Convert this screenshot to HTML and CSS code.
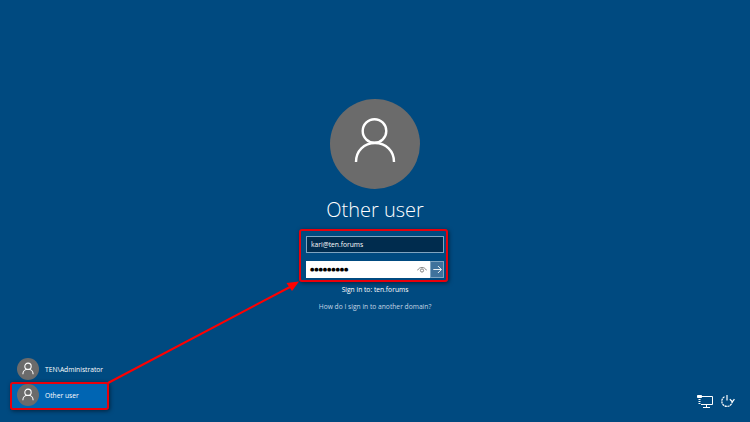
FILE: index.html
```html
<!DOCTYPE html>
<html>
<head>
  <title>Sign in</title>
  <link rel="stylesheet" href="styles.css">
</head>
<body>
  <div class="screen">
    <main class="login">
      <div class="avatar">
        <svg width="90" height="90" viewBox="0 0 90 90" fill="none" stroke="#fff" stroke-width="2.4">
          <circle cx="44.500" cy="32" r="11.800"/>
          <path d="M26 63c0-11 8-19 19-19s19 8 19 19"/>
        </svg>
      </div>
      <h1 class="name">Other user</h1>
      <div class="fields">
        <div class="field field-user">kari@ten.forums</div>
        <div class="password-row">
          <div class="field field-pass">
            <span class="dots">●●●●●●●●●</span>
            <svg class="eye" width="10" height="6" viewBox="0 0 10 6" fill="none" stroke="#666" stroke-width="0.8">
              <path d="M0.400 3.400C1.600 1.300 3.300 0.500 5 0.500s3.400 0.800 4.600 2.900"/>
              <circle cx="5" cy="3.500" r="1.600"/>
            </svg>
          </div>
          <div class="submit">
            <svg width="9" height="9" viewBox="0 0 9 9" fill="none" stroke="#fff" stroke-width="0.9">
              <path d="M0.300 4.500h7.900M4.900 1l3.500 3.500L4.900 8"/>
            </svg>
          </div>
        </div>
      </div>
      <p class="sign-in">Sign in to: ten.forums</p>
      <p class="other-domain">How do I sign in to another domain?</p>
    </main>

    <footer class="bottom">
      <ul class="users">
        <li class="user">
          <span class="user-pic">
            <svg width="22" height="22" viewBox="0 0 90 90" fill="none" stroke="#fff" stroke-width="4.500">
              <circle cx="45" cy="34" r="13"/>
              <path d="M24 66c0-12 9-20 21-20s21 8 21 20"/>
            </svg>
          </span>
          TEN\Administrator
        </li>
        <li class="user user-active">
          <span class="user-pic">
            <svg width="22" height="22" viewBox="0 0 90 90" fill="none" stroke="#fff" stroke-width="4.500">
              <circle cx="45" cy="34" r="13"/>
              <path d="M24 66c0-12 9-20 21-20s21 8 21 20"/>
            </svg>
          </span>
          Other user
        </li>
      </ul>
      <div class="tray">
        <svg width="16" height="13" viewBox="0 0 16 13" fill="none" stroke="#fff" stroke-width="1">
          <path d="M4 1.500h11.500v8H4M9.500 9.500v2.500M6 12.500h7"/>
          <path d="M0.500 0.500h4v2h-4z" fill="#fff"/>
          <path d="M1.500 4.500h2M1.500 6.500h2M1.500 8.500h2"/>
        </svg>
        <svg width="15" height="14" viewBox="0 0 15 14" fill="none" stroke="#fff" stroke-width="1.200">
          <path d="M4.500 2.700a5.200 5.200 0 1 0 7.700 4.800" stroke-dasharray="2.200 0.600"/>
          <path d="M7 1v5.500"/>
          <path d="M9.800 5.300l2.600 2.500 2-2.600"/>
        </svg>
      </div>
    </footer>

    <!-- annotations drawn on top of the screenshot -->
    <div class="mark mark-fields"></div>
    <div class="mark mark-user"></div>
    <svg class="arrow" width="750" height="422" viewBox="0 0 750 422" fill="none">
      <path d="M108 383L290 287" stroke="#f00" stroke-width="2"/>
      <path d="M299 281.500L286.500 283L292 291z" fill="#f00"/>
    </svg>
  </div>
</body>
</html>
```

FILE: styles.css
```css
* {
  box-sizing: border-box;
}

body {
  margin: 0;
  background-color: #004a80;
  font-family: "Open Sans", "Liberation Sans", sans-serif;
  color: #fff;
}

.screen {
  position: relative;
  display: flex;
  flex-direction: column;
  justify-content: space-between;
  width: 750px;
  height: 422px;
  overflow: hidden;
  background-color: #004a80;
}

.login {
  display: flex;
  flex-direction: column;
  align-items: center;
  padding-top: 99px;
}

.avatar {
  width: 90px;
  height: 90px;
  border-radius: 50%;
  background-color: #6b6b6b;
}

.avatar svg {
  display: block;
}

.name {
  margin: 5px 0 0;
  height: 31px;
  font-size: 20px;
  line-height: 31px;
  font-weight: 300;
}

.fields {
  display: flex;
  flex-direction: column;
  gap: 8px;
  width: 138px;
  margin-top: 11px;
}

.field {
  height: 17px;
  font-size: 6.7px;
  line-height: 15px;
  padding-left: 4px;
}

.field-user {
  border: 1px solid #7fa4c0;
  background-color: #002c4e;
}

.password-row {
  display: flex;
}

.field-pass {
  display: flex;
  align-items: center;
  justify-content: space-between;
  flex: 1;
  padding-right: 3px;
  background-color: #fff;
  color: #000;
}

.dots {
  font-family: "DejaVu Sans", sans-serif;
  font-size: 5px;
  letter-spacing: -0.1px;
}

.submit {
  display: flex;
  align-items: center;
  justify-content: center;
  width: 14px;
  height: 17px;
  background-color: #3f729c;
  border: 1px solid #7fa4c0;
}

.sign-in,
.other-domain {
  margin: 0;
  font-size: 6.7px;
  line-height: 10px;
}

.sign-in {
  margin-top: 7px;
}

.other-domain {
  margin-top: 7px;
  color: #c4d6e4;
}

.bottom {
  display: flex;
  align-items: flex-end;
  justify-content: space-between;
  padding: 0 15px 14px 12px;
}

.users {
  margin: 0;
  padding: 0;
  list-style: none;
  width: 96px;
}

.user {
  display: flex;
  align-items: center;
  gap: 6px;
  height: 26px;
  padding-left: 5px;
  font-size: 6.7px;
}

.user-active {
  background-color: #0065b3;
}

.user-pic {
  width: 22px;
  height: 22px;
  border-radius: 50%;
  background-color: #6b6b6b;
}

.user-pic svg {
  display: block;
}

.tray {
  display: flex;
  align-items: flex-end;
  gap: 7px;
}

.mark {
  position: absolute;
  border: 2px solid #e8000b;
  border-radius: 3px;
  box-shadow: 1px 1px 4px rgba(0, 0, 0, 0.5);
}

.mark-fields {
  left: 299px;
  top: 229px;
  width: 149px;
  height: 53px;
}

.mark-user {
  left: 10px;
  top: 382px;
  width: 99px;
  height: 28px;
}

.arrow {
  position: absolute;
  left: 0;
  top: 0;
}
```
